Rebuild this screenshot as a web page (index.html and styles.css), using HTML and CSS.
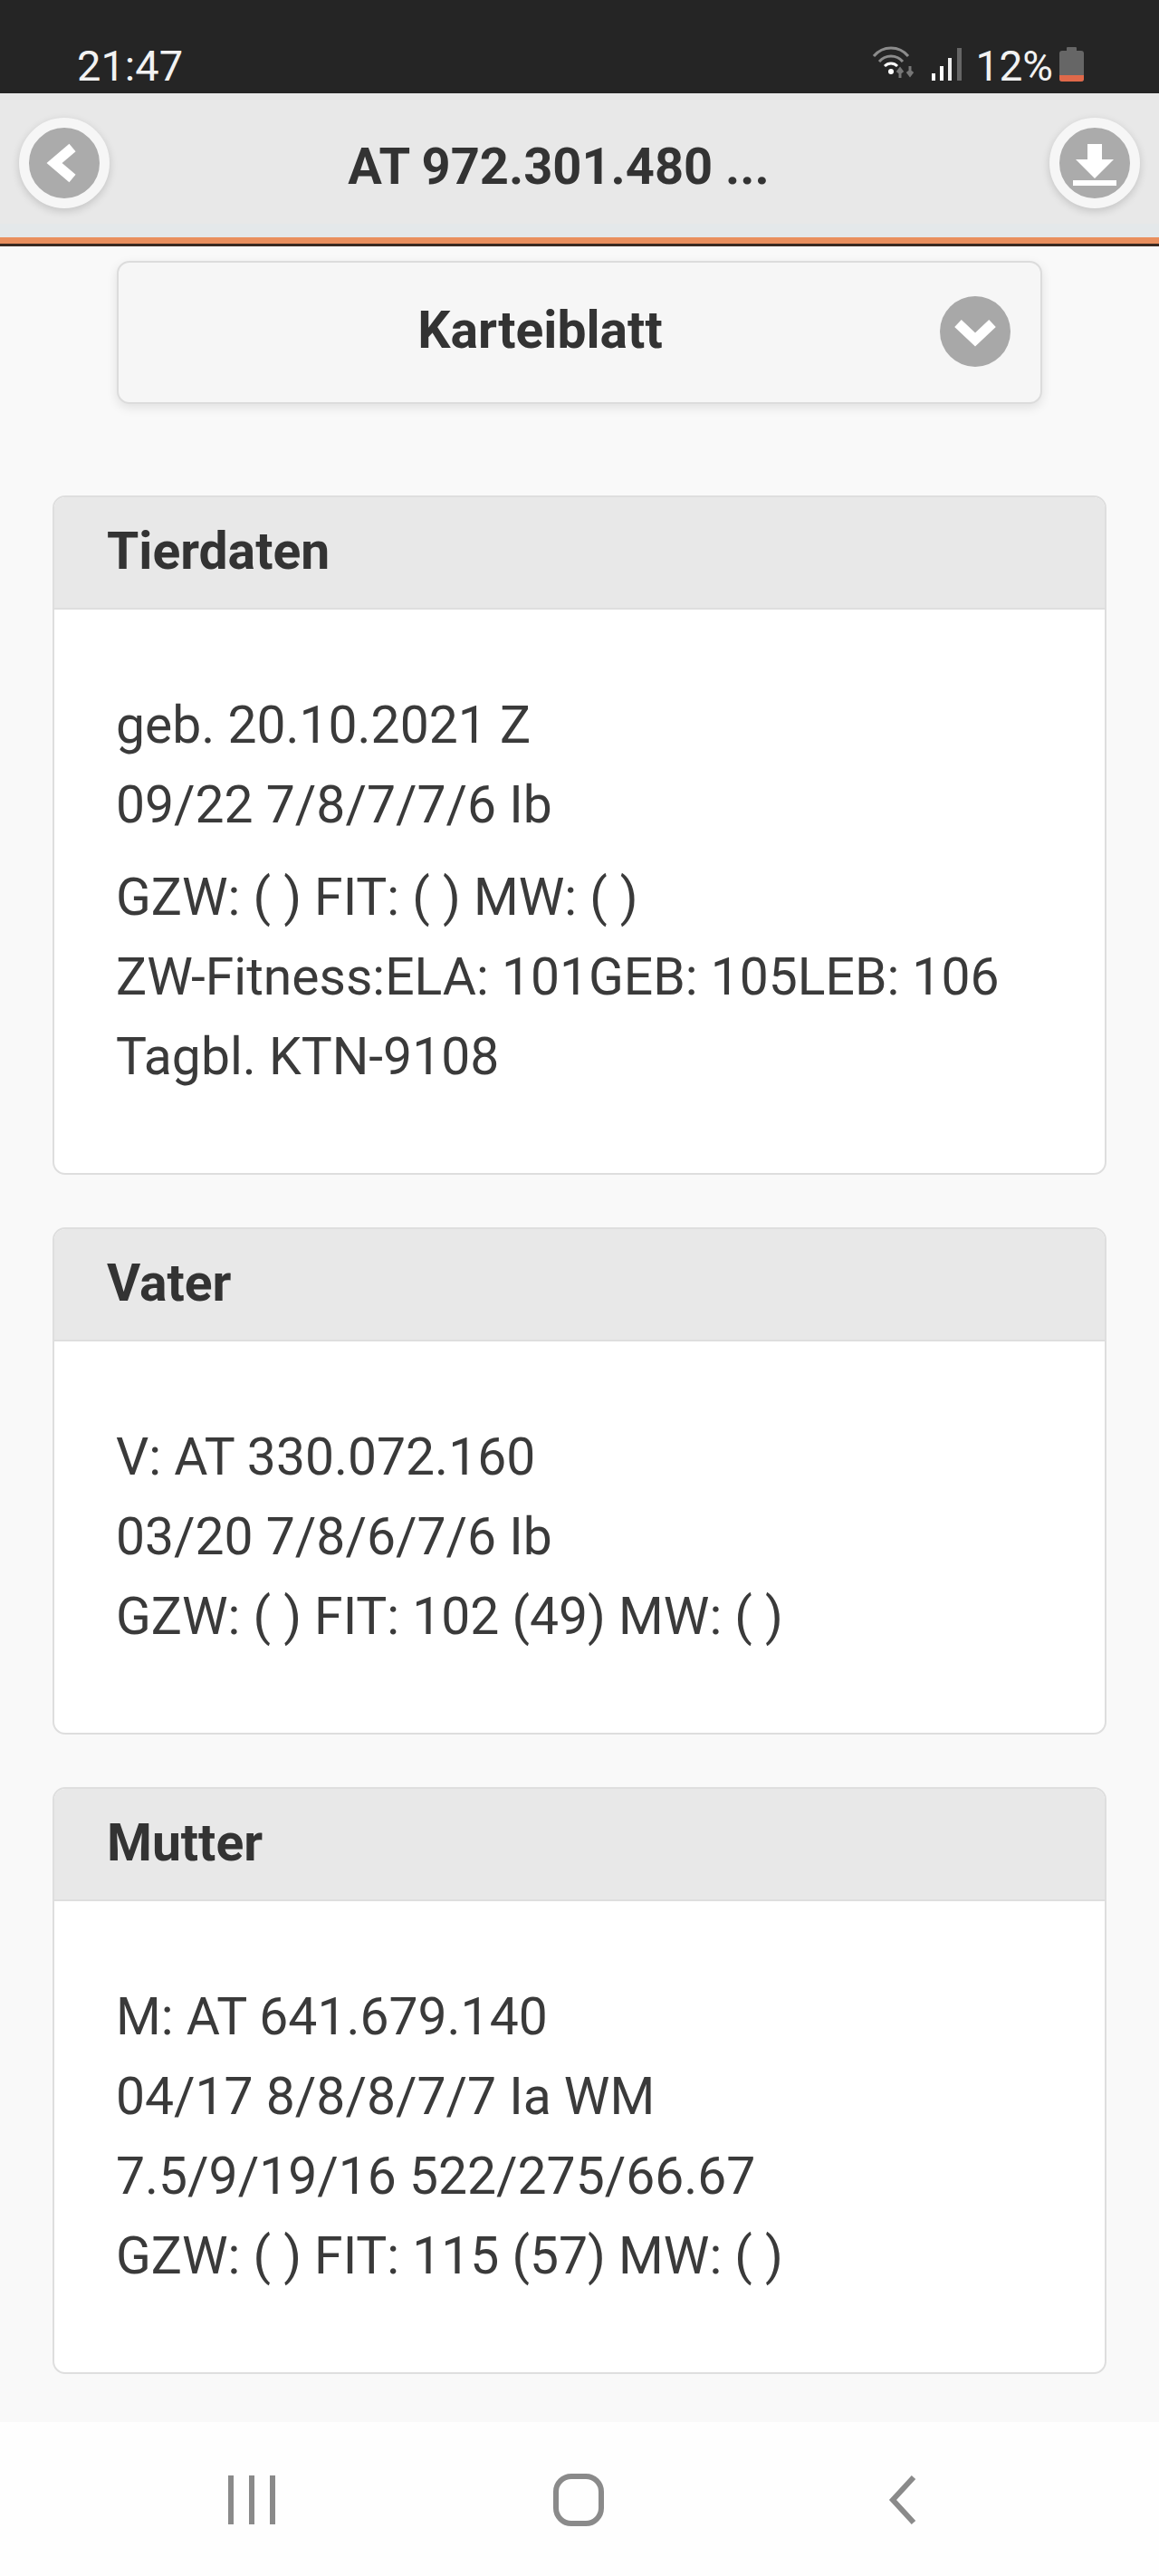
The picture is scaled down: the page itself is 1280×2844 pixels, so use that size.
FILE: index.html
```html
<!DOCTYPE html>
<html lang="de">
<head>
<meta charset="utf-8">
<title>AT 972.301.480</title>
<link rel="stylesheet" href="styles.css">
</head>
<body>
<div class="statusbar">
  <span class="clock">21:47</span>
  <div class="status-right">
    <svg class="ic-wifi" viewBox="0 0 48 36" width="48" height="36">
      <path d="M2 11 C12 -1 30 -1 40 11" class="wifi-dim"/>
      <path d="M8 17 C15 9 27 9 34 17" class="wifi-dim"/>
      <path d="M14 22 C18 18 24 18 28 22" class="wifi-on"/>
      <circle cx="21" cy="28" r="3" fill="#fff"/>
      <path d="M31 35 V26 M28 29 L31 25 L34 29 M42 22 V32 M39 28 L42 32 L45 28" class="wifi-arrows"/>
    </svg>
    <svg class="ic-signal" viewBox="0 0 34 36" width="34" height="36">
      <rect x="0" y="28" width="4" height="8" fill="#fff"/>
      <rect x="9" y="20" width="4" height="16" fill="#fff"/>
      <rect x="18" y="11" width="4" height="25" fill="#eee"/>
      <rect x="28" y="0" width="5" height="36" fill="#666"/>
    </svg>
    <span class="battery-pct">12%</span>
    <svg class="ic-battery" viewBox="0 0 27 38" width="27" height="38">
      <rect x="8" y="0" width="11" height="5" rx="1" fill="#666"/>
      <rect x="0" y="4" width="27" height="34" rx="3" fill="#666"/>
      <path d="M0 31 H27 V35 a3 3 0 0 1 -3 3 H3 a3 3 0 0 1 -3 -3 Z" fill="#e0694a"/>
    </svg>
  </div>
</div>

<header class="topbar">
  <button class="round-btn" aria-label="Zurück">
    <svg viewBox="0 0 78 78" width="78" height="78"><path d="M48 22 L28 39 L48 56" class="glyph"/></svg>
  </button>
  <h1 class="title">AT 972.301.480 ...</h1>
  <button class="round-btn" aria-label="Herunterladen">
    <svg viewBox="0 0 78 78" width="78" height="78">
      <path d="M31 18 H47 V35 H60 L39 56 L18 35 H31 Z" fill="#fff"/>
      <rect x="15" y="58" width="48" height="6" fill="#fff"/>
    </svg>
  </button>
</header>

<main class="content">
  <div class="select">
    <span class="select-label">Karteiblatt</span>
    <span class="select-icon">
      <svg viewBox="0 0 78 78" width="78" height="78"><path d="M20 30 L39 48 L58 30" class="glyph"/></svg>
    </span>
  </div>

  <section class="card">
    <h2 class="card-head">Tierdaten</h2>
    <div class="card-body">
      <p class="line">geb. 20.10.2021 Z</p>
      <p class="line">09/22 7/8/7/7/6 Ib</p>
      <p class="line line-gap">GZW: ( ) FIT: ( ) MW: ( )</p>
      <p class="line">ZW-Fitness:ELA: 101GEB: 105LEB: 106</p>
      <p class="line">Tagbl. KTN-9108</p>
    </div>
  </section>

  <section class="card">
    <h2 class="card-head">Vater</h2>
    <div class="card-body">
      <p class="line">V: AT 330.072.160</p>
      <p class="line">03/20 7/8/6/7/6 Ib</p>
      <p class="line">GZW: ( ) FIT: 102 (49) MW: ( )</p>
    </div>
  </section>

  <section class="card">
    <h2 class="card-head">Mutter</h2>
    <div class="card-body">
      <p class="line">M: AT 641.679.140</p>
      <p class="line">04/17 8/8/8/7/7 Ia WM</p>
      <p class="line">7.5/9/19/16 522/275/66.67</p>
      <p class="line">GZW: ( ) FIT: 115 (57) MW: ( )</p>
    </div>
  </section>
</main>

<nav class="navbar">
  <svg viewBox="0 0 60 60" width="60" height="60"><path d="M8 3 V57 M31 3 V57 M54 3 V57" class="nav-stroke"/></svg>
  <svg viewBox="0 0 60 60" width="60" height="60"><rect x="7" y="4" width="50" height="52" rx="17" class="nav-stroke"/></svg>
  <svg viewBox="0 0 60 60" width="60" height="60"><path d="M42 5 L19 30 L42 55" class="nav-stroke"/></svg>
</nav>
</body>
</html>
```
FILE: styles.css
```css
* { box-sizing: border-box; }
html, body { margin: 0; padding: 0; }
body {
  width: 1280px;
  height: 2844px;
  display: flex;
  flex-direction: column;
  font-family: Roboto, "Liberation Sans", sans-serif;
  color: #333;
  background: #f9f9f9;
  overflow: hidden;
}

.statusbar {
  height: 103px;
  flex: none;
  background: #252525;
  color: #f2f2f2;
  display: flex;
  align-items: flex-end;
  justify-content: space-between;
  padding: 0 83px 3px 85px;
  font-size: 47px;
  line-height: 54px;
}
.status-right { display: flex; align-items: flex-end; font-size: 46px; }
.ic-wifi { margin-bottom: 13px; }
.ic-signal { margin: 0 15px 11px 18px; }
.ic-battery { margin: 0 0 10px 7px; }
.wifi-dim, .wifi-on, .wifi-arrows { fill: none; stroke-width: 3; }
.wifi-dim { stroke: #8c8c8c; }
.wifi-on { stroke: #fff; }
.wifi-arrows { stroke: #777; }

.topbar {
  height: 169px;
  flex: none;
  background: #e8e8e8;
  border-bottom: 3px solid #3a2a22;
  box-shadow: inset 0 -7px 0 #e98f5e, inset 0 -22px 0 #e4e8ea;
  display: flex;
  align-items: flex-start;
  justify-content: space-between;
  padding: 27px 21px 0;
}
.round-btn {
  width: 100px;
  height: 100px;
  padding: 0;
  border: 11px solid #f6f6f6;
  border-radius: 50%;
  background: #ababab;
  box-shadow: 0 3px 10px rgba(0, 0, 0, .16);
  display: flex;
  align-items: center;
  justify-content: center;
}
.glyph { fill: none; stroke: #fff; stroke-width: 11; }
.title {
  margin: 0 46px 0 0;
  font-size: 56px;
  line-height: 108px;
  font-weight: 700;
  color: #333;
}

.content {
  flex: 1;
  padding: 16px 58px 0;
  min-height: 0;
}
.select {
  width: 1022px;
  height: 158px;
  margin: 0 auto 101px;
  padding: 0 87px 6px 0;
  background: #f6f6f6;
  border: 2px solid #dcdcdc;
  border-radius: 14px;
  box-shadow: 0 4px 12px rgba(0, 0, 0, .1);
  display: flex;
  align-items: center;
  justify-content: center;
  position: relative;
}
.select-label { font-size: 57px; font-weight: 700; color: #333; }
.select-icon {
  position: absolute;
  right: 33px;
  top: 37px;
  width: 78px;
  height: 78px;
  border-radius: 50%;
  background: #a8a8a8;
}
.select-icon svg { display: block; }

.card {
  width: 1164px;
  margin-bottom: 58px;
  border: 2px solid #dedede;
  border-radius: 14px;
  overflow: hidden;
  background: #fff;
}
.card-head {
  margin: 0;
  height: 124px;
  padding-left: 58px;
  background: #e8e8e8;
  border-bottom: 2px solid #dedede;
  font-size: 57px;
  line-height: 119px;
  font-weight: 700;
  color: #333;
}
.card-body { padding: 84px 68px; }
.line {
  margin: 0;
  font-size: 57px;
  line-height: 88px;
  color: #3a3a3a;
}
.line-gap { margin-top: 14px; }

.navbar {
  height: 170px;
  flex: none;
  background: #fefefe;
  display: flex;
  align-items: flex-start;
  gap: 300px;
  padding: 56px 0 0 247px;
}
.nav-stroke { fill: none; stroke: #8a8a8a; stroke-width: 6; }
```
